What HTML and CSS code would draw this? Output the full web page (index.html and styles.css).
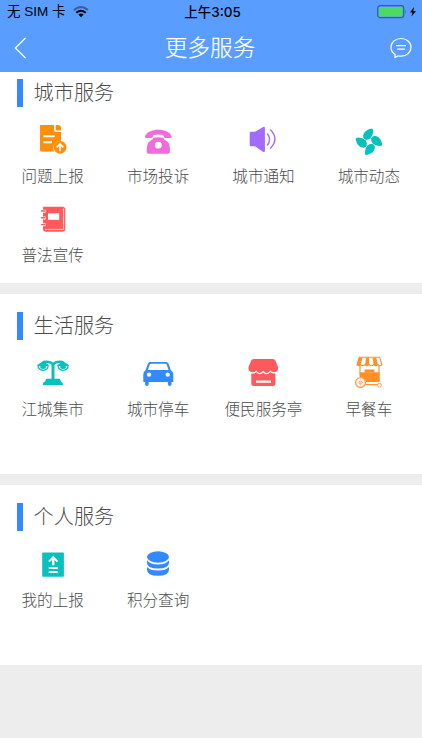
FILE: index.html
```html
<!DOCTYPE html>
<html lang="zh-CN">
<head>
<meta charset="utf-8">
<title>更多服务</title>
<link rel="stylesheet" href="styles.css">
</head>
<body>
<header class="header">
  <div class="status">
    <div class="carrier"><span>无 SIM 卡</span>
      <svg width="16" height="12" viewBox="0 0 16 12" fill="none"><path d="M1 4Q8-2 15 4" stroke="#315f9f" stroke-width="1.8"/><path d="M3.3 6.7Q8 2.7 12.7 6.7" stroke="#000" stroke-width="2"/><path d="M5.4 8.5Q8 6.4 10.6 8.5L8 11.3Z" fill="#000"/></svg>
    </div>
    <div class="time">上午3:05</div>
    <svg class="battery" width="40" height="14" viewBox="0 0 40 14"><rect x=".7" y=".7" width="26" height="12" rx="2.6" fill="none" stroke="#315f9f" stroke-width="1.2"/><rect x="2" y="2" width="23.4" height="9.4" rx="1" fill="#4cd964"/><path d="M28.3 4.8q1.4 2 0 4Z" fill="#315f9f"/><path d="M37 2L33 7.4h2.5L34.4 11.6 39 6.2h-2.7Z" fill="#000"/></svg>
  </div>
  <nav class="nav">
    <svg width="14" height="22" viewBox="0 0 14 22" fill="none" stroke="#fff" stroke-width="1.2"><path d="M11.5 1L1.3 11l10.2 10"/></svg>
    <h1>更多服务</h1>
    <svg width="22" height="22" viewBox="0 0 22 22" fill="none" stroke="#fff" stroke-width="1.2" stroke-linejoin="round" stroke-linecap="round"><path d="M5 17.3C2.5 15.7 1 13.2 1 10.4 1 5.3 5.4 1.5 11 1.5s10 3.7 10 8.700-4.300 9-9.800 9c-1.200 0-2.200-.1-3.100-.5L5 20.600Z"/><path d="M6.500 8.600h9M7.500 12.100h7"/></svg>
  </nav>
</header>
<main>
  <section class="group group-city">
    <h2>城市服务</h2>
    <ul>
      <li><svg viewBox="0 0 34 34"><path fill="#ff8f0b" d="M4.500 2H18v4.800q0 2.200 2.200 2.200H25v9.200a6.800 6.800 0 0 0-7.500 8.600q.2.900.7 1.700H5.200Q4 28.500 4 27.300V2.500Z"/><path fill="#ff8f0b" d="M19.700 2H22q3 0 3 3v2.400h-4.200q-1.100 0-1.100-1.100Z"/><path d="M7.500 13.300h11.300M7.500 19.300H16" stroke="#fff" stroke-width="2"/><circle cx="24" cy="24.300" r="6.400" fill="#ff8f0b"/><path d="M24 28.200v-6.800m-3.300 3L24 21l3.300 3.400" fill="none" stroke="#fff" stroke-width="1.600"/></svg><span>问题上报</span></li>
      <li><svg viewBox="0 0 34 34"><path fill="#f16bdc" d="M4 13.500C5.500 9 11 6.700 17.300 6.700S29.200 9 30.700 13.500q.3 1.400-1 1.400h-5.400q-1.200 0-1.600-1.300l-.6-1.500q-4.800-1-9.600 0l-.6 1.500q-.4 1.300-1.600 1.300H5Q3.700 14.900 4 13.500Z"/><path fill="#f16bdc" fill-rule="evenodd" d="M12.500 14.700q4.800-1 9.600 0l1.300 2.100 3.700 2.300q1.800 2.500 1.900 9.500 0 2.200-2.100 2.200H7.800q-2.100 0-2.100-2.200.1-7 1.900-9.500l3.700-2.300Zm4.800 4.100a3.400 3.400 0 1 0 0 6.800 3.400 3.400 0 0 0 0-6.800Z"/></svg><span>市场投诉</span></li>
      <li><svg viewBox="0 0 34 34"><path fill="#a16bff" d="M4.700 8.800H9L17.300 3.900q1.600-.6 1.600 1v23.200q0 1.600-1.600 1L9 23.200H4.700q-1 0-1-1V9.800q0-1 1-1Z"/><path d="M21.300 10.500q4.500 6 0 12M24.200 6.500q9.500 9.500 0 19" fill="none" stroke="#a16bff" stroke-width="1.400"/></svg><span>城市通知</span></li>
      <li><svg viewBox="0 0 34 34"><g fill="#07c1bd" transform="translate(17 18.800)"><path id="blade" d="M2.400-13.300Q4.300-13.300 4.200-10.500 4-6 1.600-3.600-.8-1.600-3.600-2.300-6.400-3.300-5.800-6.800-4.400-11.800 2.400-13.300Z"/><use href="#blade" transform="rotate(90)"/><use href="#blade" transform="rotate(180)"/><use href="#blade" transform="rotate(270)"/></g></svg><span>城市动态</span></li>
      <li><svg viewBox="0 0 34 34"><path fill="#fc5a5d" d="M8 4.700h18.300q3 0 3 3v19q0 3-3 3H10q-3 0-3-3V5.700q0-1 1-1Z"/><path d="M27.600 6.500v20.900H9" fill="none" stroke="#fff" stroke-width=".8"/><path fill="#fff" d="M12 11.300h11.200v6.500H12Z"/><path d="M6 9.200h3.500M6 16h3.500M6 22.800h3.500" stroke="#fff" stroke-width="3"/><path d="M5.500 9h3M5.500 15.800h3M5.500 22.600h3" stroke="#fc5a5d" stroke-width="1.400" stroke-linecap="round"/></svg><span>普法宣传</span></li>
    </ul>
  </section>
  <section class="group">
    <h2>生活服务</h2>
    <ul>
      <li><svg viewBox="0 0 34 34"><g fill="none" stroke="#07c1bd"><path stroke-width="3" d="M17 7v16"/><path stroke-width="2.400" d="M6 8.500Q6 5.800 10 5.800q5 0 7 2.600 2-2.600 7-2.600 4 0 4 2.700"/><path stroke-width="1.300" d="M2 9.300h10.200q-.2 5-5.100 5T2 9.300ZM22 9.300h10.200q-.2 5-5.100 5t-5.100-5Z"/></g><path fill="#07c1bd" d="M1.500 10Q2.500 6.500 7 6.500T12.700 10ZM21.500 10q1-3.500 5.500-3.500t5.700 3.500ZM4.300 10h5.500v2.200q-2.700 1.500-5.500 0ZM24.300 10h5.500v2.200q-2.700 1.500-5.500 0ZM10 22.700h14l1 3q2 .3 2 3.300H6.800q0-3 2.200-3.300Z"/></svg><span>江城集市</span></li>
      <li><svg viewBox="0 0 34 34"><path fill="#3389ff" fill-rule="evenodd" d="M9.200 6h16q1.700 0 2.300 1.600l2.300 6.600q2.500 1.500 2.500 4.300V26h-1.800v2.200q0 1.800-1.800 1.800t-1.800-1.800V26H7.700v2.200Q7.700 30 5.900 30t-1.800-1.800V26H2.300v-7.500q0-2.800 2.300-4.300l2.300-6.600Q7.500 6 9.200 6Zm.8 1.700q-1 0-1.300.9L6.900 14h20.600l-1.800-5.400q-.3-.9-1.300-.9ZM8 16.400a2.200 2.200 0 1 0 0 4.400 2.200 2.200 0 0 0 0-4.400Zm18.700 0a2.200 2.200 0 1 0 0 4.400 2.200 2.200 0 0 0 0-4.400Z"/></svg><span>城市停车</span></li>
      <li><svg viewBox="0 0 34 34"><path fill="#fc5a5d" d="M7.500 3h19.600q1.500 0 2.300 1.600l2.400 6q1.300 5-3.400 5.700-2.400.2-4-1.700-3.300 4.800-7.200.2-3.800 4.600-7.100-.2-1.600 1.900-4 1.700-4.700-.7-3.400-5.700l2.500-6Q6 3 7.500 3Z"/><path fill="#fc5a5d" fill-rule="evenodd" d="M5.300 17.500q3 .4 4.800-1.200 3.800 3.400 7.100.5 3.900 3.300 7.200-.5 1.900 1.600 5 1.200v10q0 2.500-2.500 2.500H7.800q-2.500 0-2.500-2.500Zm4.700 7v2.300h15v-2.300Z"/></svg><span>便民服务亭</span></li>
      <li><svg viewBox="0 0 34 34"><path fill="#fff" stroke="#ff912f" stroke-width="1.100" d="M7.300 1.300h20.400l2.200 7.300q-1.900 2.200-4 0-2.200 2.200-4.500 0-2 2.200-4.200 0-2.200 2.200-4.200 0-2.300 2.200-4.500 0-2 2.200-3.500 0Z"/><path fill="#ff9028" d="M7 1.500h3.600L8.500 9Q6 10.500 5 8.500ZM14.300 1.500h2.800L17 9q-2.500 1-4-.2ZM20.600 1.500h3.600L26 9q-2.500 1-4.500-.2ZM7.500 16.300h20v9.700H14.200q-2-5-6.700-5Z"/><path d="M8 9.500v8M27 9.500v16M13 28.600h13" stroke="#ff912f" stroke-width="1.200"/><path d="M12.500 16.500v-3h10v3Z" fill="#ff9028"/><g fill="#fff" stroke="#ff9e4d"><circle cx="8.500" cy="26.600" r="4.900" stroke-width="1.300"/><circle cx="8.500" cy="26.600" r="1.500"/><circle cx="27.500" cy="29.200" r="1.900"/></g><path d="M8.500 22v9M4 26.600h9" stroke="#ffc18c" stroke-width=".5"/></svg><span>早餐车</span></li>
    </ul>
  </section>
  <section class="group">
    <h2>个人服务</h2>
    <ul>
      <li><svg viewBox="0 0 34 34"><rect x="6.200" y="5.500" width="21.700" height="24.200" rx=".8" fill="#07c1bd"/><path fill="#fff" d="M17.200 8.700l5 5.300-1.300 1.300-2.500-2.400v5.400H16v-5.400l-2.500 2.400-1.300-1.300ZM12.700 20h9v2h-9ZM12.700 24h9v2h-9Z"/></svg><span>我的上报</span></li>
      <li><svg viewBox="0 0 34 34" fill="#3389ff"><ellipse cx="17" cy="10" rx="11" ry="5.800"/><path d="M6 13.300Q9 17.500 17 17.500t11-4.200v2.400q0 5.800-11 5.800T6 15.700ZM6 20q3 3.600 11 3.600T28 20v2.800q0 6-11 6t-11-6Z"/></svg><span>积分查询</span></li>
    </ul>
  </section>
</main>
</body>
</html>
```
FILE: styles.css
```css
* { box-sizing: border-box; }
body {
  margin: 0;
  height: 750px;
  background: #fff;
  color: #4c4c4c;
  font-family: "Noto Sans CJK SC", sans-serif;
  font-weight: 300;
  overflow: hidden;
}
svg { display: block; flex: none; }
h1, h2, ul { margin: 0; padding: 0; font-weight: 300; }
.header { height: 72px; background: #589dff; }
.status {
  display: grid;
  grid-template-columns: 1fr auto 1fr;
  align-items: center;
  height: 24px;
  padding: 0 5px 0 7px;
  color: #000;
  font-family: "Liberation Sans", "Noto Sans CJK SC", sans-serif;
  font-size: 13.5px;
  font-weight: 400;
  line-height: 24px;
}
.carrier { display: flex; align-items: center; gap: 7px; white-space: nowrap; }
.time { padding-left: 1px; font-weight: 500; font-family: Inter, "Noto Sans CJK SC", sans-serif; }
.battery { justify-self: end; }
.nav {
  display: flex;
  align-items: center;
  justify-content: space-between;
  height: 47px;
  padding: 0 10px 0 14px;
  color: #fff;
}
h1 { padding: 0 0 2px 2px; font-size: 22.7px; line-height: 44px; -webkit-text-stroke: .2px; }
main { height: 666px; background: #ededed; }
.group { height: 180px; margin-bottom: 11px; padding-top: 18px; background: #fff; }
.group-city { height: 211px; padding-top: 7px; }
h2 {
  height: 28px;
  margin-left: 17px;
  padding-left: 10.5px;
  border-left: 6px solid #3389ff;
  font-size: 20.2px;
  line-height: 26px;
}
ul {
  display: grid;
  grid-template-columns: repeat(4, 105.4px);
  grid-auto-rows: 79px;
  padding-top: 16px;
  list-style: none;
}
li { display: flex; flex-direction: column; align-items: center; }
li svg { width: 34px; height: 34px; }
li span { margin-top: 6px; font-size: 15.6px; line-height: 24px; white-space: nowrap; }
```
